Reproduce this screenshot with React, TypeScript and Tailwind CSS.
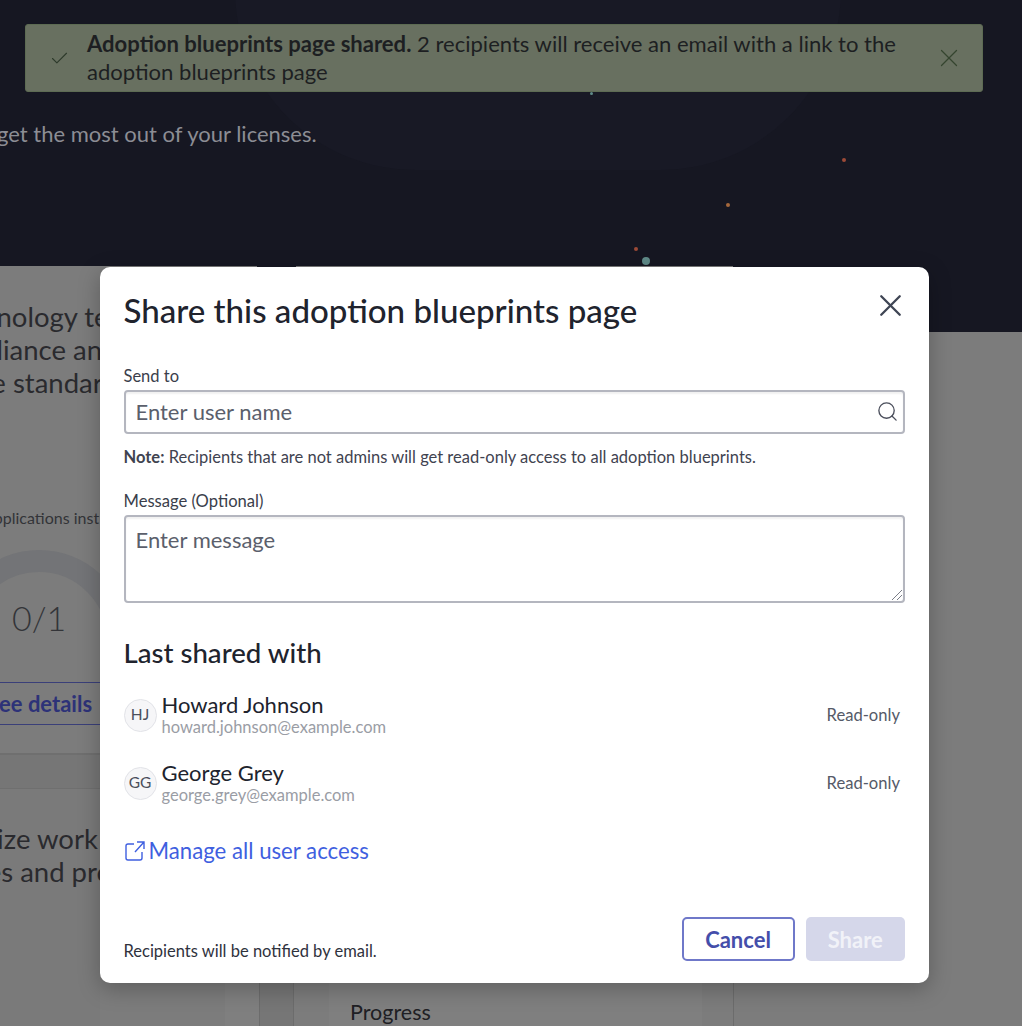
import { Check, Search, X } from "lucide-react";

function SharedUser({ initials, name, email }: { initials: string; name: string; email: string }) {
  return (
    <div className="flex h-[68px] items-center justify-between pr-[5px]">
      <div className="flex items-center gap-[5px]">
        <div className="flex h-[33px] w-[33px] items-center justify-center rounded-full border border-[#e2e3e8] bg-[#f6f6f8] text-[15.5px] text-[#4b4f5c]">
          {initials}
        </div>
        <div className="flex flex-col">
          <span className="text-[22px] leading-[24px] text-[#20232d]">{name}</span>
          <span className="text-[16.5px] leading-[20px] text-[#9a9da5]">{email}</span>
        </div>
      </div>
      <span className="text-[16.6px] text-[#555a68]">Read-only</span>
    </div>
  );
}

export default function App() {
  return (
    <div className="relative h-[1026px] w-[1022px] overflow-hidden bg-[#7c7c7c] font-['Lato','Liberation_Sans',sans-serif]">
      {/* page behind the modal */}
      <div className="relative h-[332px] overflow-hidden bg-[#161722] pt-[120px]">
        <div className="absolute left-[235px] top-[-190px] h-[360px] w-[606px] rounded-full bg-[#181925]" />
        <p className="relative ml-[-3px] whitespace-nowrap text-[22px] leading-[28px] text-[#8c8d94]">
          get the most out of your licenses.
        </p>
      </div>
      <div className="absolute left-0 top-[266px] h-[66px] w-[257px] bg-[#7c7c7c]" />
      <div className="absolute left-[296px] top-[266px] h-[66px] w-[437px] bg-[#7c7c7c]" />
      <div className="absolute left-[-30px] top-[300px] w-[130px] overflow-hidden whitespace-nowrap text-[27.5px] leading-[33px] text-[#2a2a2e]">
        <p className="ml-[-2px]">chnology te</p>
        <p className="ml-[-40px]">compliance and</p>
        <p className="ml-[-43px]">secure standards</p>
      </div>
      <div className="absolute left-0 top-[508px] w-[100px] overflow-hidden whitespace-nowrap text-[16px] leading-[20px] text-[#333438]">
        <span className="ml-[-17px]">Applications inst</span>
      </div>
      <svg className="absolute left-0 top-[540px] h-[110px] w-[100px]" viewBox="0 0 100 110" fill="none">
        <circle cx="39" cy="100" r="79" stroke="#737477" strokeWidth="22" />
      </svg>
      <div className="absolute left-[12px] top-[598px] text-[34px] font-light leading-[40px] text-[#333438]">0/1</div>
      <div className="absolute left-0 top-[682px] flex h-[43px] w-[100px] items-center overflow-hidden whitespace-nowrap border-y border-[#3a3f79] bg-[#7c7c7c] text-[22px] font-bold text-[#2d3278]">
        <span className="ml-[-13px]">See details</span>
      </div>
      <div className="absolute left-0 top-[753px] h-[35px] w-[100px] border-t-2 border-[#6f6f6f] bg-[#767676]" />
      <div className="absolute left-0 top-[788px] h-[238px] w-[100px] border-t border-[#6f6f6f] bg-[#7a7a7a]" />
      <div className="absolute left-[-30px] top-[822px] w-[130px] overflow-hidden whitespace-nowrap text-[27.5px] leading-[33px] text-[#2a2a2e]">
        <p className="ml-[-80px]">Standardize work</p>
        <p className="ml-[-75px]">processes and process</p>
      </div>
      <div className="absolute left-[225px] top-[983px] h-[43px] w-[34px] bg-[#7f7f7f]" />
      <div className="absolute left-[259px] top-[983px] h-[43px] w-[35px] border-x border-[#6c6c6c] bg-[#767676]" />
      <div className="absolute left-[329px] top-[983px] h-[43px] w-[373px] bg-[#7f7f7f]">
        <span className="ml-[21px] text-[21.5px] leading-[58px] text-[#202024]">Progress</span>
      </div>
      <div className="absolute left-[733px] top-[983px] h-[43px] w-px bg-[#6c6c6c]" />

      {/* confetti dots */}
      <span className="absolute left-[590px] top-[92px] h-[3px] w-[3px] rounded-full bg-[#5f8a88]" />
      <span className="absolute left-[842px] top-[158px] h-[4px] w-[4px] rounded-full bg-[#9c4a37]" />
      <span className="absolute left-[726px] top-[203px] h-[4px] w-[4px] rounded-full bg-[#a6683c]" />
      <span className="absolute left-[634px] top-[247px] h-[4px] w-[4px] rounded-full bg-[#9c4a37]" />
      <span className="absolute left-[642px] top-[257px] h-[8px] w-[8px] rounded-full bg-[#5f8a88]" />

      {/* toast */}
      <div className="absolute left-[25px] top-[24px] flex h-[68px] w-[958px] items-center rounded-[3px] border border-[#5d6b53] bg-[#687060] pl-[23px] pr-[18px] text-[#1d1f22]">
        <Check className="h-[21px] w-[21px] shrink-0 text-[#2d3a2b]" strokeWidth={1.25} />
        <p className="ml-[17px] flex-1 text-[22.05px] leading-[28px]">
          <strong className="font-bold">Adoption blueprints page shared.</strong> 2 recipients will receive an email with a link to the
          <br />
          adoption blueprints page
        </p>
        <X className="h-[30px] w-[30px] shrink-0 text-[#35452f]" strokeWidth={1} />
      </div>

      {/* modal */}
      <div
        role="dialog"
        className="absolute left-[100px] top-[267px] flex h-[716px] w-[829px] flex-col rounded-[10px] bg-white pl-[23.5px] pr-[24px] shadow-[0_6px_22px_rgba(0,0,0,0.25)]"
      >
        <div className="flex items-start justify-between pt-[23px]">
          <h2 className="whitespace-nowrap text-[33.1px] font-medium leading-[40px] text-[#20232d]">Share this adoption blueprints page</h2>
          <X className="mr-[-4px] mt-[-3px] h-[37px] w-[37px] text-[#3f4554]" strokeWidth={1.5} />
        </div>

        <label className="mt-[36px] text-[16.5px] leading-[20px] text-[#3a3e4b]">Send to</label>
        <div className="mt-[4px] flex h-[44px] items-center justify-between rounded-[4px] border-2 border-[#b4b6bf] pb-[2px] pl-[10px] pr-[4px] shadow-[inset_0_2px_2px_rgba(0,0,0,0.06)]">
          <span className="text-[22px] text-[#5b5f6c]">Enter user name</span>
          <Search className="h-[23px] w-[23px] text-[#4a4e5b]" strokeWidth={1.4} />
        </div>
        <p className="mt-[13px] whitespace-nowrap text-[16.5px] leading-[20px] text-[#3f4350]">
          <strong className="font-bold">Note:</strong> Recipients that are not admins will get read-only access to all adoption blueprints.
        </p>

        <label className="mt-[24px] text-[16.6px] leading-[20px] text-[#3a3e4b]">Message (Optional)</label>
        <div className="relative mt-[4px] h-[88px] rounded-[4px] border-2 border-[#b4b6bf] pl-[10px] pt-[8px] shadow-[inset_0_2px_2px_rgba(0,0,0,0.06)]">
          <span className="text-[22px] leading-[30px] text-[#5b5f6c]">Enter message</span>
          <svg className="absolute bottom-0 right-0 h-[12px] w-[12px] text-[#7b7e88]" viewBox="0 0 12 12" fill="none" stroke="currentColor">
            <path d="M1 11 11 1M6 11l5-5" />
          </svg>
        </div>

        <h3 className="mt-[32px] text-[27.6px] font-medium leading-[36px] text-[#20232d]">Last shared with</h3>

        <div className="mt-[10px] flex flex-col">
          <SharedUser initials="HJ" name="Howard Johnson" email="howard.johnson@example.com" />
          <SharedUser initials="GG" name="George Grey" email="george.grey@example.com" />
        </div>

        <a className="mt-[20px] flex items-center gap-[3px] text-[22.2px] leading-[28px] text-[#3f5fe0]">
          <svg className="h-[22px] w-[22px]" viewBox="0 0 22 22" fill="none" stroke="currentColor" strokeWidth="1.4">
            <path d="M10 4H4a2 2 0 0 0-2 2v12a2 2 0 0 0 2 2h12a2 2 0 0 0 2-2v-6M13 2h7v7M20 2l-9 10" />
          </svg>
          Manage all user access
        </a>

        <div className="mt-auto flex items-center justify-between pb-[22px]">
          <span className="pt-[24px] text-[16.5px] leading-[20px] text-[#2f323d]">Recipients will be notified by email.</span>
          <div className="flex gap-[11px]">
            <button className="h-[44px] w-[113px] rounded-[5px] border-2 border-[#6f78c9] text-[22px] font-bold text-[#444eaa]">Cancel</button>
            <button className="h-[44px] w-[99.5px] rounded-[5px] bg-[#d5d7ea] text-[22px] font-bold text-[#f1f2f8]">Share</button>
          </div>
        </div>
      </div>
    </div>
  );
}
